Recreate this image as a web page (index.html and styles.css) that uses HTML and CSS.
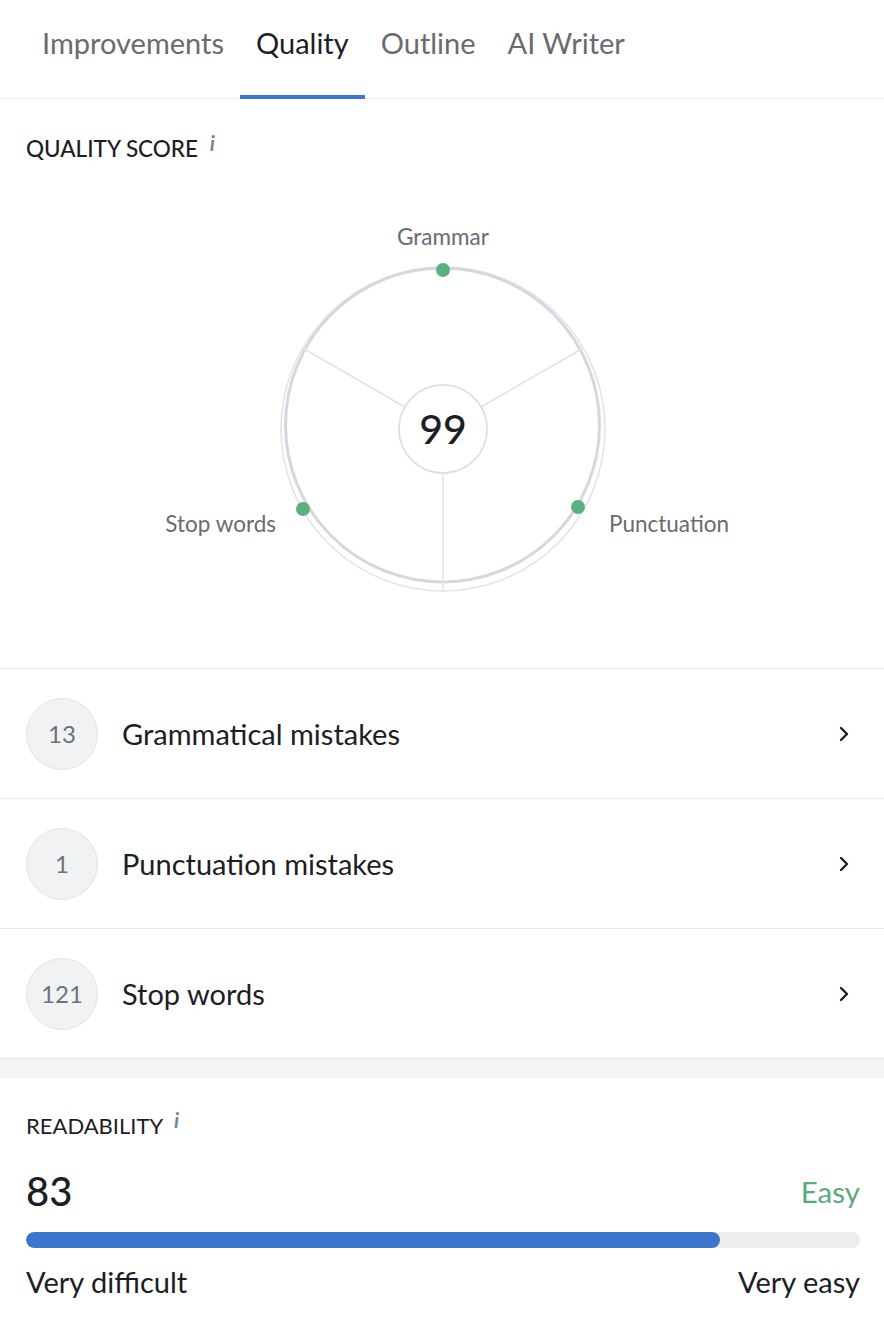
FILE: index.html
```html
<!DOCTYPE html>
<html lang="en">
<head>
    <meta charset="UTF-8">
    <meta name="viewport" content="width=device-width, initial-scale=1.0">
    <title>Quality</title>
    <link rel="stylesheet" href="styles.css">
</head>
<body>
    <nav class="tabs">
        <div class="tab">Improvements</div>
        <div class="tab active">Quality</div>
        <div class="tab">Outline</div>
        <div class="tab">AI Writer</div>
    </nav>

    <section class="quality">
        <h2 class="section-title">Quality score <span class="info">i</span></h2>
        <svg class="chart" width="832" height="496" viewBox="0 0 832 496">
            <circle cx="417" cy="257" r="162" fill="none" stroke="#e3e3e7" stroke-width="1.5"/>
            <circle cx="416.5" cy="253" r="157" fill="none" stroke="#d6d6e1" stroke-width="3"/>
            <line x1="378.9" y1="235" x2="276.7" y2="176" stroke="#e3e3e7" stroke-width="1.5"/>
            <line x1="455.1" y1="235" x2="557.3" y2="176" stroke="#e3e3e7" stroke-width="1.5"/>
            <line x1="417" y1="301" x2="417" y2="419" stroke="#e3e3e7" stroke-width="1.5"/>
            <circle cx="417" cy="257" r="44" fill="#fff" stroke="#dcdce2" stroke-width="1.5"/>
            <circle cx="417" cy="98" r="7" fill="#5bb07f"/>
            <circle cx="277" cy="337" r="7" fill="#5bb07f"/>
            <circle cx="552" cy="335" r="7" fill="#5bb07f"/>
            <text class="axis" x="417" y="73" text-anchor="middle">Grammar</text>
            <text class="axis" x="250" y="360" text-anchor="end">Stop words</text>
            <text class="axis" x="583" y="360">Punctuation</text>
            <text class="score" x="417" y="272" text-anchor="middle">99</text>
        </svg>
    </section>

    <ul class="issues">
        <li class="issue">
            <span class="count">13</span>
            <span class="issue-name">Grammatical mistakes</span>
            <svg class="chevron" width="12" height="18" viewBox="0 0 12 18"><path d="M3 3l6 6-6 6" fill="none" stroke="#1d1d25" stroke-width="2.4" stroke-linecap="round" stroke-linejoin="round"/></svg>
        </li>
        <li class="issue">
            <span class="count">1</span>
            <span class="issue-name">Punctuation mistakes</span>
            <svg class="chevron" width="12" height="18" viewBox="0 0 12 18"><path d="M3 3l6 6-6 6" fill="none" stroke="#1d1d25" stroke-width="2.4" stroke-linecap="round" stroke-linejoin="round"/></svg>
        </li>
        <li class="issue">
            <span class="count">121</span>
            <span class="issue-name">Stop words</span>
            <svg class="chevron" width="12" height="18" viewBox="0 0 12 18"><path d="M3 3l6 6-6 6" fill="none" stroke="#1d1d25" stroke-width="2.4" stroke-linecap="round" stroke-linejoin="round"/></svg>
        </li>
    </ul>

    <div class="band"></div>

    <section class="readability">
        <h2 class="section-title light">Readability <span class="info">i</span></h2>
        <div class="read-head">
            <span class="read-score">83</span>
            <span class="read-label">Easy</span>
        </div>
        <div class="bar"><div class="bar-fill" style="width: 83.2%"></div></div>
        <div class="bar-legend">
            <span>Very difficult</span>
            <span>Very easy</span>
        </div>
    </section>
</body>
</html>
```

FILE: styles.css
```css
body {
    margin: 0;
    background: #fff;
    color: #1d1d25;
    font-family: Lato, "Open Sans", sans-serif;
    width: 884px;
}

/* Tabs */
.tabs {
    display: flex;
    padding-left: 26px;
    height: 98px;
    border-bottom: 1.5px solid #ececef;
}

.tab {
    padding: 0 16px;
    font-size: 29px;
    color: #6a6a6f;
    line-height: 86px;
    border-bottom: 4px solid transparent;
    margin-bottom: -1px;
}

.tab.active {
    color: #1d1d25;
    border-bottom-color: #3a76cc;
}

.section-title {
    margin: 0;
    height: 24px;
    font-size: 22.5px;
    font-weight: 500;
    line-height: 24px;
    text-transform: uppercase;
    white-space: nowrap;
}

.section-title.light {
    font-weight: 400;
    font-size: 22px;
}

.info {
    display: inline-block;
    margin-left: 6px;
    font-style: italic;
    font-weight: 700;
    font-size: 21px;
    line-height: 1;
    color: #74889a;
    text-transform: none;
    vertical-align: 6px;
}

/* Chart */
.quality {
    padding: 33px 26px 0;
    border-bottom: 1.5px solid #e8e8ec;
}

.chart {
    display: block;
    margin-top: 16px;
}

.chart .axis {
    font-size: 22.5px;
    fill: #6a6a6f;
    font-family: Lato, sans-serif;
}

.chart .score {
    font-size: 41px;
    fill: #1d1d25;
    font-family: Lato, sans-serif;
    font-weight: 500;
}

/* Issue rows */
.issues {
    list-style: none;
    margin: 0;
    padding: 0;
}

.issue {
    display: flex;
    align-items: center;
    height: 129px;
    padding: 0 34px 0 26px;
    border-bottom: 1.5px solid #e8e8ec;
}

.issue:last-child {
    border-bottom: none;
}

.count {
    width: 70px;
    height: 70px;
    border-radius: 50%;
    background: #f1f2f4;
    border: 1px solid #e2e3e7;
    display: flex;
    align-items: center;
    justify-content: center;
    font-size: 24px;
    color: #6c727c;
    margin-right: 24px;
}

.issue-name {
    flex: 1;
    font-size: 29px;
}

.band {
    height: 19px;
    background: #f3f4f6;
    border-top: 1.5px solid #e6e7ea;
}

/* Readability */
.readability {
    padding: 31px 24px 0 26px;
}

.read-head {
    display: flex;
    justify-content: space-between;
    align-items: center;
    margin-top: 36px;
    height: 44px;
}

.read-score {
    font-size: 40px;
    font-weight: 500;
}

.read-label {
    font-size: 29.5px;
    color: #5aaa7a;
}

.bar {
    margin-top: 19px;
    height: 16px;
    border-radius: 8px;
    background: #eeeeef;
    overflow: hidden;
}

.bar-fill {
    height: 100%;
    background: #3a76cc;
    border-radius: 8px;
}

.bar-legend {
    display: flex;
    justify-content: space-between;
    margin-top: 18px;
    font-size: 29px;
    line-height: 32px;
}
```
